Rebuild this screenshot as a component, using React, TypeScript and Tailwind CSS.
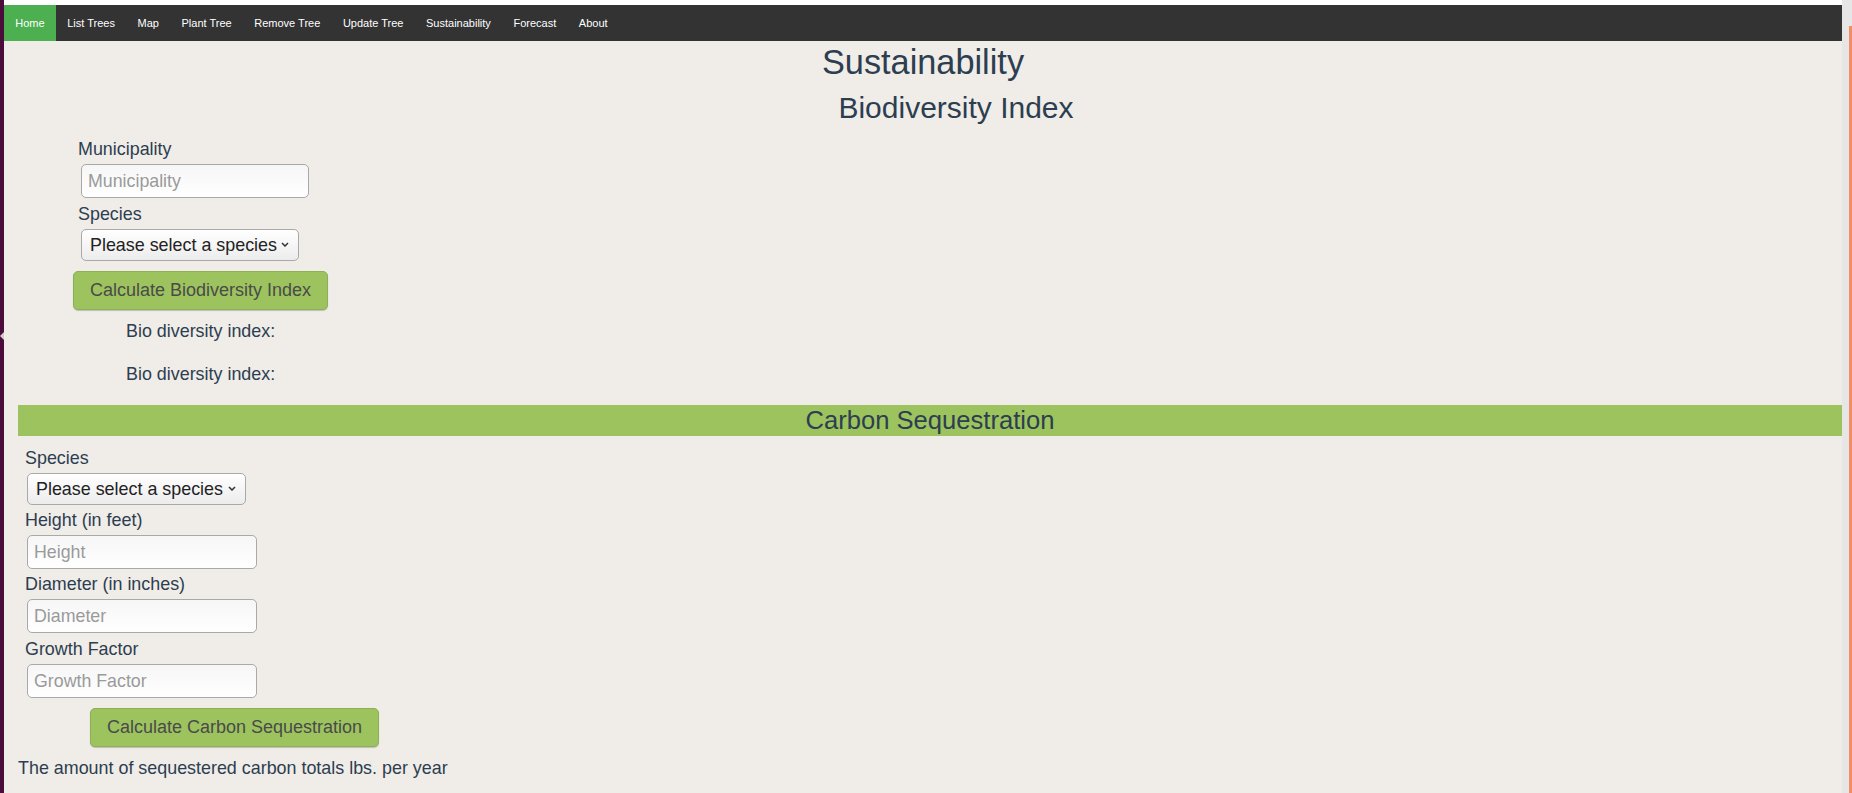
import React from 'react';

const navItems = ['Home', 'List Trees', 'Map', 'Plant Tree', 'Remove Tree', 'Update Tree', 'Sustainability', 'Forecast', 'About'];

function TextField({ placeholder, width }: { placeholder: string; width: string }) {
  return (
    <input
      type="text"
      placeholder={placeholder}
      className={`block h-[34px] ${width} rounded-[5px] border border-[#a9a9a9] bg-gradient-to-b from-[#f6f6f6] to-white px-[6px] text-[17.8px] text-[#333] placeholder:text-[#9a9a9a] outline-none`}
    />
  );
}

function SpeciesSelect({ width }: { width: string }) {
  return (
    <div className={`relative h-[32px] ${width}`}>
      <select className="h-full w-full appearance-none rounded-[5px] border border-[#a9a9a9] bg-gradient-to-b from-white to-[#ececec] pl-[8px] pr-[20px] text-[17.9px] text-[#222] outline-none">
        <option>Please select a species</option>
      </select>
      <svg className="pointer-events-none absolute right-[10px] top-[13px]" width="8" height="5" viewBox="0 0 8 5">
        <polyline points="1,1 4,4 7,1" fill="none" stroke="#333" strokeWidth="1.5" />
      </svg>
    </div>
  );
}

function Label({ children, className = '' }: { children: React.ReactNode; className?: string }) {
  return <label className={`block text-[17.9px] leading-[20px] text-[#2c3e50] ${className}`}>{children}</label>;
}

function GreenButton({ children, className = '' }: { children: React.ReactNode; className?: string }) {
  return (
    <button className={`block h-[39px] rounded-[5px] border border-[#8db052] bg-[#9dc35e] text-[18px] text-[#4a4a4a] shadow-[0_1px_1px_rgba(0,0,0,0.2)] ${className}`}>
      {children}
    </button>
  );
}

export default function App() {
  return (
    <div className="flex h-screen w-full overflow-hidden bg-[#f0ece8]" style={{ fontFamily: '"Liberation Sans", Arial, sans-serif' }}>
      {/* left launcher strip */}
      <div className="relative w-[4px] shrink-0 bg-[#4b0c3b]">
        <div className="absolute left-0 top-[332px] h-0 w-0 border-y-[4px] border-r-[4px] border-y-transparent border-r-[#cfcfcf]" />
      </div>

      <div className="flex min-w-0 flex-1 flex-col">
        <div className="h-[5px] bg-white" />
        <nav className="flex h-[36px] items-stretch bg-[#333333]">
          {navItems.map((item, i) => (
            <a
              key={item}
              className={`flex items-center px-[11.3px] text-[11px] text-white ${i === 0 ? 'bg-[#4caf50]' : ''}`}
            >
              {item}
            </a>
          ))}
        </nav>

        <main className="flex-1 bg-[#f0ece8] text-[#2c3e50]">
          <h1 className="mt-px text-center text-[34.3px] leading-[40px] font-normal">Sustainability</h1>

          <div className="ml-[66px]">
            <h2 className="mt-[8px] text-center text-[30px] leading-[36px] font-normal">Biodiversity Index</h2>

            <Label className="mt-[13px] ml-[8px]">Municipality</Label>
            <div className="mt-[5px] ml-[11px]">
              <TextField placeholder="Municipality" width="w-[228px]" />
            </div>
            <Label className="mt-[6px] ml-[8px]">Species</Label>
            <div className="mt-[5px] ml-[11px]">
              <SpeciesSelect width="w-[218px]" />
            </div>
            <GreenButton className="mt-[10px] ml-[3px] w-[255px]">Calculate Biodiversity Index</GreenButton>

            <p className="mt-[11px] ml-[56px] text-[17.9px] leading-[20px]">Bio diversity index:</p>
            <p className="mt-[23px] ml-[56px] text-[17.9px] leading-[20px]">Bio diversity index:</p>
          </div>

          <div className="mt-[21px] ml-[14px] h-[31px] bg-[#9dc35e] text-center text-[25.6px] leading-[31px]">
            Carbon Sequestration
          </div>

          <div>
            <Label className="mt-[12px] ml-[21px]">Species</Label>
            <div className="mt-[5px] ml-[23px]">
              <SpeciesSelect width="w-[219px]" />
            </div>
            <Label className="mt-[5px] ml-[21px]">Height (in feet)</Label>
            <div className="mt-[5px] ml-[23px]">
              <TextField placeholder="Height" width="w-[230px]" />
            </div>
            <Label className="mt-[5px] ml-[21px]">Diameter (in inches)</Label>
            <div className="mt-[5px] ml-[23px]">
              <TextField placeholder="Diameter" width="w-[230px]" />
            </div>
            <Label className="mt-[6px] ml-[21px]">Growth Factor</Label>
            <div className="mt-[5px] ml-[23px]">
              <TextField placeholder="Growth Factor" width="w-[230px]" />
            </div>
            <GreenButton className="mt-[10px] ml-[86px] w-[289px]">Calculate Carbon Sequestration</GreenButton>
            <p className="mt-[11px] ml-[14px] text-[17.9px] leading-[20px]">The amount of sequestered carbon totals lbs. per year</p>
          </div>
        </main>
      </div>

      {/* right scrollbar area */}
      <div className="flex w-[10px] shrink-0 justify-end bg-[#e6e6e6] pt-[26px]">
        <div className="h-full w-[3px] bg-[#f28c65]" />
      </div>
    </div>
  );
}
